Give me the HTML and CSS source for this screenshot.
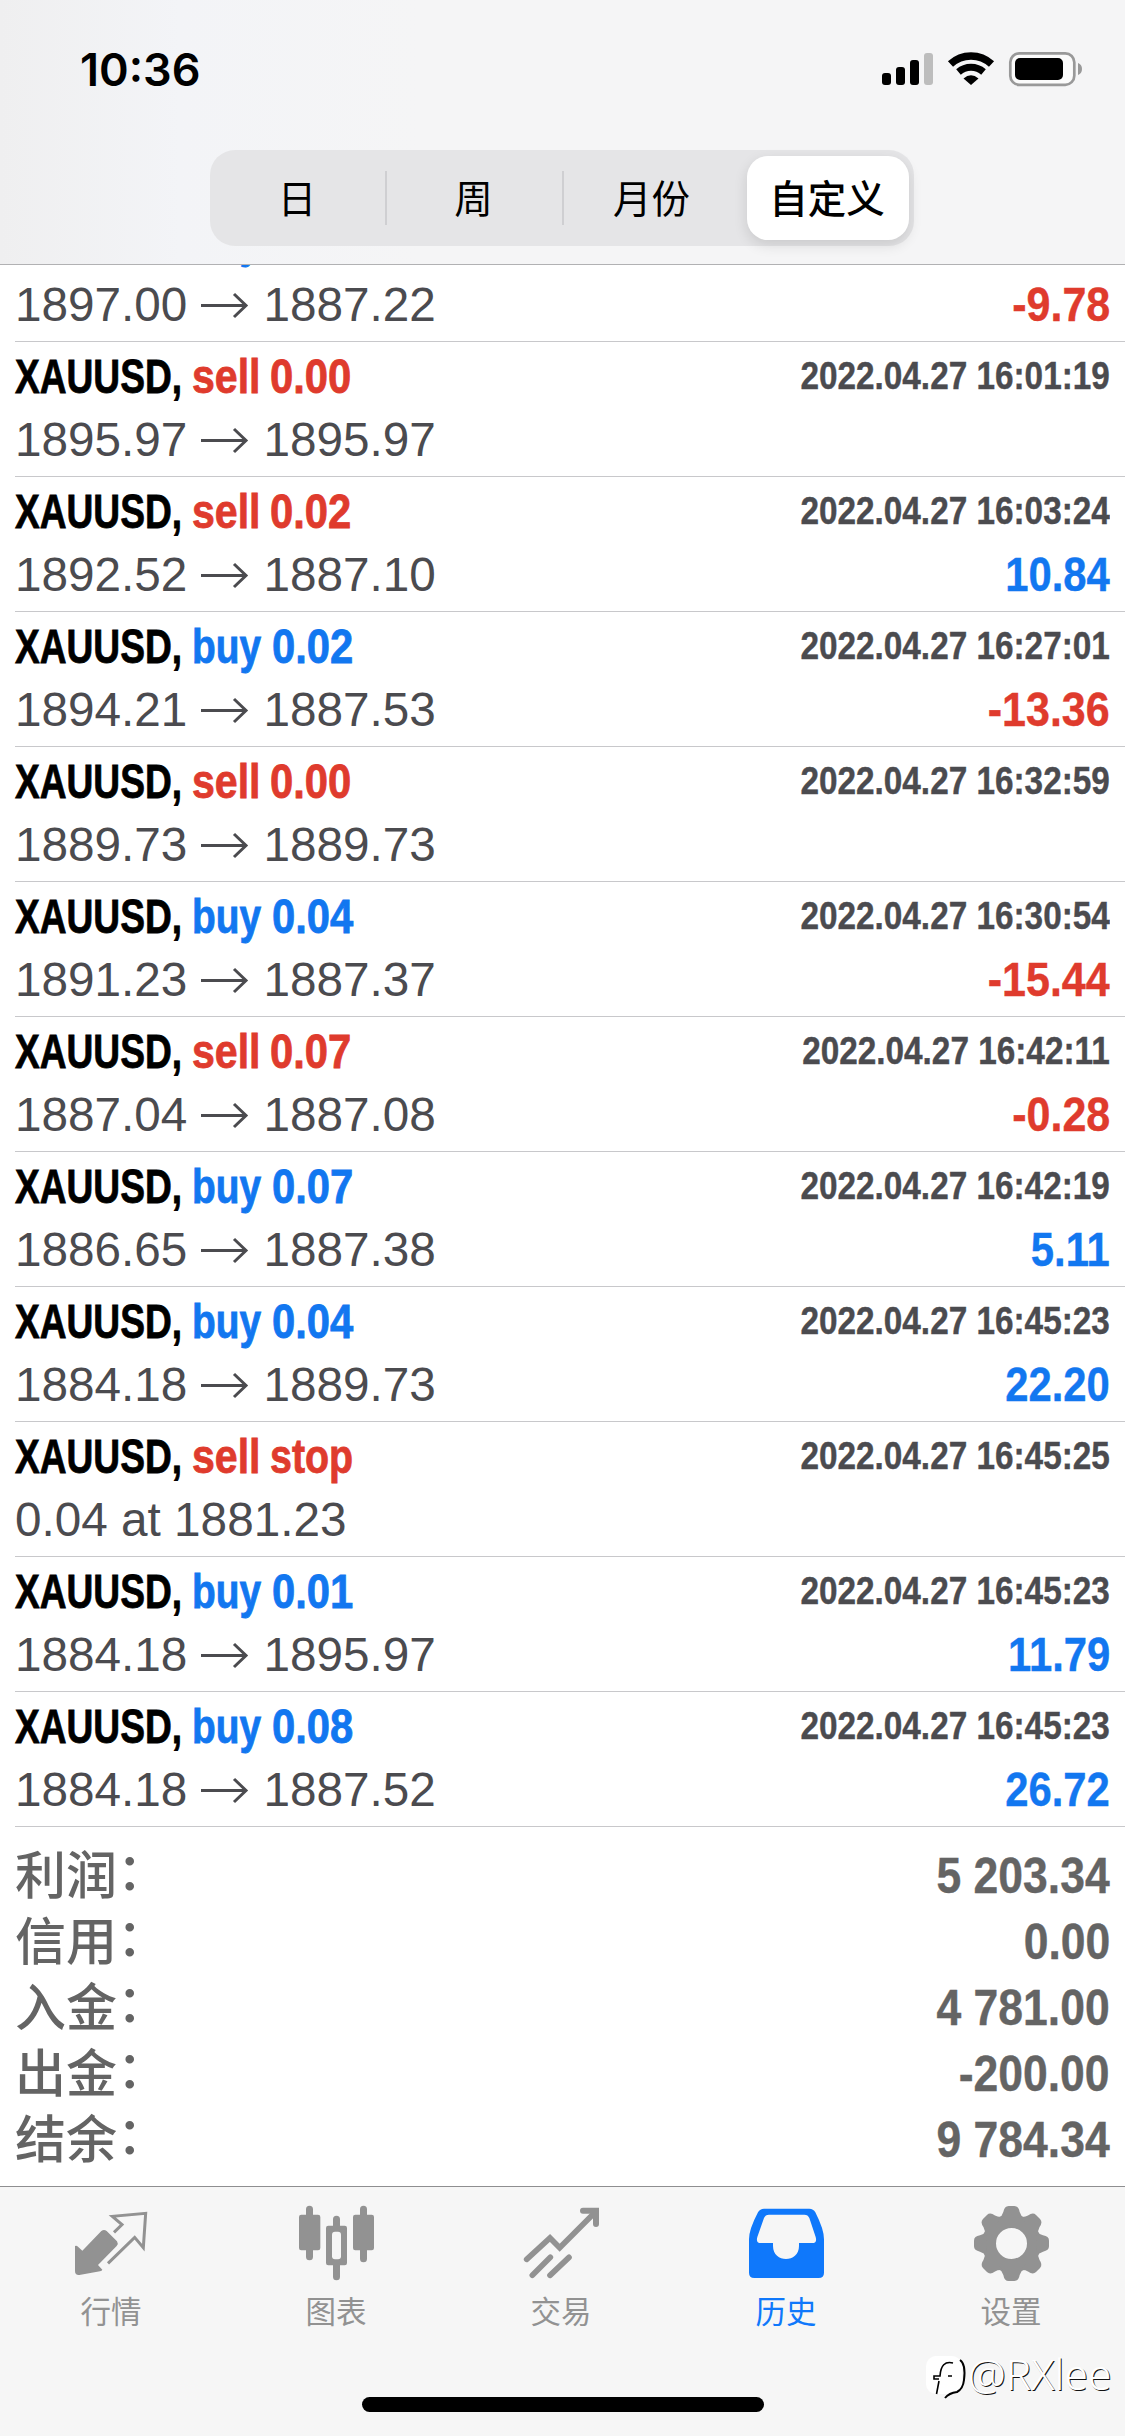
FILE: index.html
```html
<!DOCTYPE html>
<html lang="zh-CN">
<head>
<meta charset="utf-8">
<title>历史</title>
<link rel="stylesheet" href="styles.css">
</head>
<body>
<div class="screen">
  <header class="header">
    <div class="status">
      <span class="time">10:36</span>
      <svg class="status-icons" viewBox="0 0 206 40" width="206" height="40">
        <rect x="1" y="25" width="9" height="12" rx="3"/>
        <rect x="15" y="19" width="9" height="18" rx="3"/>
        <rect x="29" y="12" width="9" height="25" rx="3"/>
        <rect x="43" y="5" width="9" height="32" rx="3" fill="#bdbdbd"/>
        <g fill="none" stroke="#000">
          <path d="M69.500 16A30 30 0 0 1 110.500 16" stroke-width="7.500"/>
          <path d="M77.500 24A19 19 0 0 1 102.500 24" stroke-width="7"/>
        </g>
        <path d="M90 37L82.500 30.500Q90 24 97.500 30.500Z"/>
        <rect x="129.300" y="5.300" width="64" height="31.500" rx="9" fill="#fbfbfb" stroke="#999" stroke-width="2.700"/>
        <rect x="134" y="10" width="48" height="22" rx="5"/>
        <path d="M197 15Q201 16.500 201 21T197 27Z" fill="#999"/>
      </svg>
    </div>
    <nav class="segments">
      <span class="segment">日</span>
      <span class="segment">周</span>
      <span class="segment">月份</span>
      <span class="segment selected">自定义</span>
    </nav>
  </header>

  <main class="history">
    <ul class="deals" id="deals"></ul>
    <dl class="summary">
      <div class="total"><dt>利润<i>：</i></dt><dd>5 203.34</dd></div>
      <div class="total"><dt>信用<i>：</i></dt><dd>0.00</dd></div>
      <div class="total"><dt>入金<i>：</i></dt><dd>4 781.00</dd></div>
      <div class="total"><dt>出金<i>：</i></dt><dd>-200.00</dd></div>
      <div class="total"><dt>结余<i>：</i></dt><dd>9 784.34</dd></div>
    </dl>
  </main>

  <footer class="tabbar">
    <div class="tabs">
      <a class="tab">
        <svg class="tab-icon" viewBox="225 108 225 225">
          <path d="M225 228Q230 226 234 230L247 242L304 183Q312 177 320 183L351 214Q356 221 350 228L294 285L307 299Q306 303 300 304L238 315Q225 316 225 303Z"/>
          <path d="M342 187L366 164L337 139L437 130L430 233L404 202L324 280" fill="none" stroke="currentColor" stroke-width="9"/>
        </svg>
        <span>行情</span>
      </a>
      <a class="tab">
        <svg class="tab-icon" viewBox="900 108 225 225">
          <path d="M928.500 118V260M1009.500 148V320M1090.500 118V266" fill="none" stroke="currentColor" stroke-width="21" stroke-linecap="round"/>
          <rect x="897" y="134" width="64" height="107" rx="7"/>
          <rect x="978" y="167" width="63" height="119" rx="7"/>
          <rect x="1059" y="134" width="63" height="107" rx="7"/>
          <rect x="996" y="185" width="27" height="83" rx="9" fill="#f6f6f6"/>
        </svg>
        <span>图表</span>
      </a>
      <a class="tab">
        <svg class="tab-icon" viewBox="315 108 225 225">
          <g fill="none" stroke="currentColor" stroke-width="17" stroke-linecap="round">
            <path d="M320 268L390 204L419 233L523 129"/>
            <path d="M489 122H528V162" stroke-width="18"/>
            <path d="M337 316L391 262M390 316L447 262"/>
          </g>
        </svg>
        <span>交易</span>
      </a>
      <a class="tab active">
        <svg class="tab-icon" viewBox="990 108 225 225">
          <path fill-rule="evenodd" d="M1032 116H1168Q1180 116 1186 127Q1212 178 1212 208V308Q1212 324 1196 324H1003Q987 324 987 308V208Q987 178 1014 127Q1020 116 1032 116ZM1047 134Q1036 134 1032 144L1012 201Q1007 219 1022 219H1059V228C1059 280 1137 280 1137 228V219H1177Q1192 219 1187 201L1168 144Q1164 134 1153 134Z"/>
        </svg>
        <span>历史</span>
      </a>
      <a class="tab">
        <svg class="tab-icon" viewBox="405 108 225 225">
          <circle cx="514.500" cy="220.500" r="67" fill="none" stroke="currentColor" stroke-width="41"/>
          <g id="teeth">
            <path id="tooth" d="M475 146Q487 138 490 126Q493 108 506 108H523Q536 108 539 126Q542 138 554 146Z"/>
            <use href="#tooth" transform="rotate(45 514.500 220.500)"/>
            <use href="#tooth" transform="rotate(90 514.500 220.500)"/>
            <use href="#tooth" transform="rotate(135 514.500 220.500)"/>
          </g>
          <use href="#teeth" transform="rotate(180 514.500 220.500)"/>
        </svg>
        <span>设置</span>
      </a>
    </div>
    <div class="home-indicator"></div>
    <div class="watermark">
      <svg viewBox="0 0 44 48" width="44" height="48">
        <rect x="2" y="4" width="36" height="38" rx="10" fill="#fff"/>
        <path d="M29 11Q17 8 16 24H10V27H15M15 29L12.500 42M24 24H28" fill="none" stroke="#000" stroke-width="1.600"/>
        <path d="M36 8Q42 12 40 28Q39 37 33 40Q25 41 21 46" fill="none" stroke="#000" stroke-width="2"/>
      </svg>
      <span>@RXlee</span>
    </div>
  </footer>
</div>
<script src="deals.js"></script>
</body>
</html>
```
FILE: styles.css
```css
* { box-sizing: border-box; margin: 0; padding: 0; }
body { background: #fff; font-family: "Liberation Sans", "Noto Sans CJK SC", sans-serif; }
.screen { width: 1125px; height: 2436px; display: flex; flex-direction: column; overflow: hidden; }

.header {
  height: 265px; flex: none; border-bottom: 1px solid #b1b1b3;
  background: linear-gradient(90deg, #efeff0 0, #f3f4f7 180px, #f5f5f6 420px, #f5f5f6 1125px);
}
.status { height: 150px; padding: 48px 38px 0 80px; display: flex; justify-content: space-between; align-items: flex-start; }
.time { font: 600 45px/44px Inter, sans-serif; }
.segments {
  width: 704px; height: 96px; margin-left: 210px; padding: 6px 5px 6px 0; border-radius: 25px;
  background: #e5e5e7; display: grid; grid-template-columns: 176px 177px 184px 162px;
}
.segment {
  display: flex; align-items: center; justify-content: center; position: relative; padding: 0 2px 4px 0;
  font: 400 38.5px/1 "Noto Sans CJK SC", sans-serif; color: #000;
}
.segment:nth-child(3) { padding-right: 7px; }
.segment:nth-child(-n+2)::after {
  content: ""; position: absolute; right: -1px; top: 15px; width: 2px; height: 54px; background: #cfcfd2;
}
.segment.selected { background: #fff; border-radius: 21px; font-weight: 500; box-shadow: 0 5px 14px rgba(0,0,0,.12); }

.history { height: 1921px; flex: none; overflow: hidden; }
.deals { list-style: none; margin-top: -58px; }
.deal { height: 135px; margin-left: 15px; padding-right: 15px; border-bottom: 1px solid #c8c8cb; }
.line { display: flex; justify-content: space-between; white-space: nowrap; }
.line:first-child { height: 68px; padding-top: 1px; }
.deal:first-child .line:first-child { padding-top: 0; }
.order { display: flex; font-weight: 700; font-size: 48px; line-height: 68px; -webkit-text-stroke: 0.8px currentColor; }
.order span { transform-origin: 0 50%; }
.symbol { width: 177px; transform: scaleX(.773); }
.word { width: 78px; transform: scaleX(.855); }
.buy .word { width: 80px; transform: scaleX(.81); }
.volume { transform: scaleX(.87); }
.volume.stop { transform: scaleX(.82); }
.buy .word, .buy .volume, .gain { color: #1277f0; }
.sell .word, .sell .volume, .loss { color: #df3b2d; }
.date { font-weight: 700; font-size: 38px; line-height: 67px; color: #4b4b4f; transform: scaleX(.877); transform-origin: 100% 50%; -webkit-text-stroke: 0.4px currentColor; }
.prices { display: flex; font-size: 47.7px; line-height: 59px; color: #4b4b4f; }
.arrow { width: 76px; height: 59px; }
.result { font-weight: 700; font-size: 47.5px; line-height: 59px; transform: scaleX(.88); transform-origin: 100% 50%; -webkit-text-stroke: 0.4px currentColor; }
.loss { transform: scaleX(.905); }

.summary { padding: 15px 15px 0; color: #646464; }
.total { height: 66px; display: flex; justify-content: space-between; line-height: 68px; }
.total dt { font: 500 51px/60px "Noto Sans CJK SC", sans-serif; }
.total i { font-style: normal; line-height: 0; vertical-align: 4px; }
.total dd { font-weight: 700; font-size: 50px; transform: scaleX(.89); transform-origin: 100% 50%; -webkit-text-stroke: 0.4px currentColor; }

.tabbar { height: 250px; flex: none; border-top: 1px solid #8e8e90; background: #f6f6f6; position: relative; }
.tabs { display: grid; grid-template-columns: repeat(5, 1fr); padding-top: 19px; height: 210px; }
.tab { display: flex; flex-direction: column; align-items: center; gap: 7px; color: #929292; font: 400 30.5px/44px "Noto Sans CJK SC", sans-serif; }
.tab span { padding-right: 3px; }
.tab.active { color: #0f78fb; }
.tab-icon { width: 75px; height: 75px; overflow: visible; fill: currentColor; }
.home-indicator { width: 402px; height: 15px; margin: 0 auto; border-radius: 8px; background: #000; }
.watermark { position: absolute; left: 924px; top: 165px; display: flex; align-items: center; }
.watermark span { font: 300 42.5px/44px "Noto Sans", sans-serif; height: 48px; color: #fff; text-shadow: 1px 1px 0 #111; }
```
FILE: deals.js
```javascript
const deals = [
  ["buy", "0.01", "", "1897.00", "1887.22", "-9.78"],
  ["sell", "0.00", "16:01:19", "1895.97", "1895.97", ""],
  ["sell", "0.02", "16:03:24", "1892.52", "1887.10", "10.84"],
  ["buy", "0.02", "16:27:01", "1894.21", "1887.53", "-13.36"],
  ["sell", "0.00", "16:32:59", "1889.73", "1889.73", ""],
  ["buy", "0.04", "16:30:54", "1891.23", "1887.37", "-15.44"],
  ["sell", "0.07", "16:42:11", "1887.04", "1887.08", "-0.28"],
  ["buy", "0.07", "16:42:19", "1886.65", "1887.38", "5.11"],
  ["buy", "0.04", "16:45:23", "1884.18", "1889.73", "22.20"],
  ["sell", "stop", "16:45:25", "0.04 at 1881.23", "", ""],
  ["buy", "0.01", "16:45:23", "1884.18", "1895.97", "11.79"],
  ["buy", "0.08", "16:45:23", "1884.18", "1887.52", "26.72"]
];

const arrow = '<svg class="arrow" viewBox="0 0 76 59"><path d="M14 30.500H59M47 19L59 30.500L47 42" fill="none" stroke="currentColor" stroke-width="3"/></svg>';

document.getElementById("deals").innerHTML = deals.map(([side, volume, time, open, close, result]) => `
  <li class="deal ${side}">
    <div class="line">
      <div class="order"><span class="symbol">XAUUSD,</span><span class="word">${side}</span><span class="volume ${volume}">${volume}</span></div>
      <div class="date">${time ? "2022.04.27 " + time : ""}</div>
    </div>
    <div class="line">
      <div class="prices"><span>${open}</span>${close ? arrow + "<span>" + close + "</span>" : ""}</div>
      <div class="result ${result.startsWith("-") ? "loss" : "gain"}">${result}</div>
    </div>
  </li>`).join("");
```
